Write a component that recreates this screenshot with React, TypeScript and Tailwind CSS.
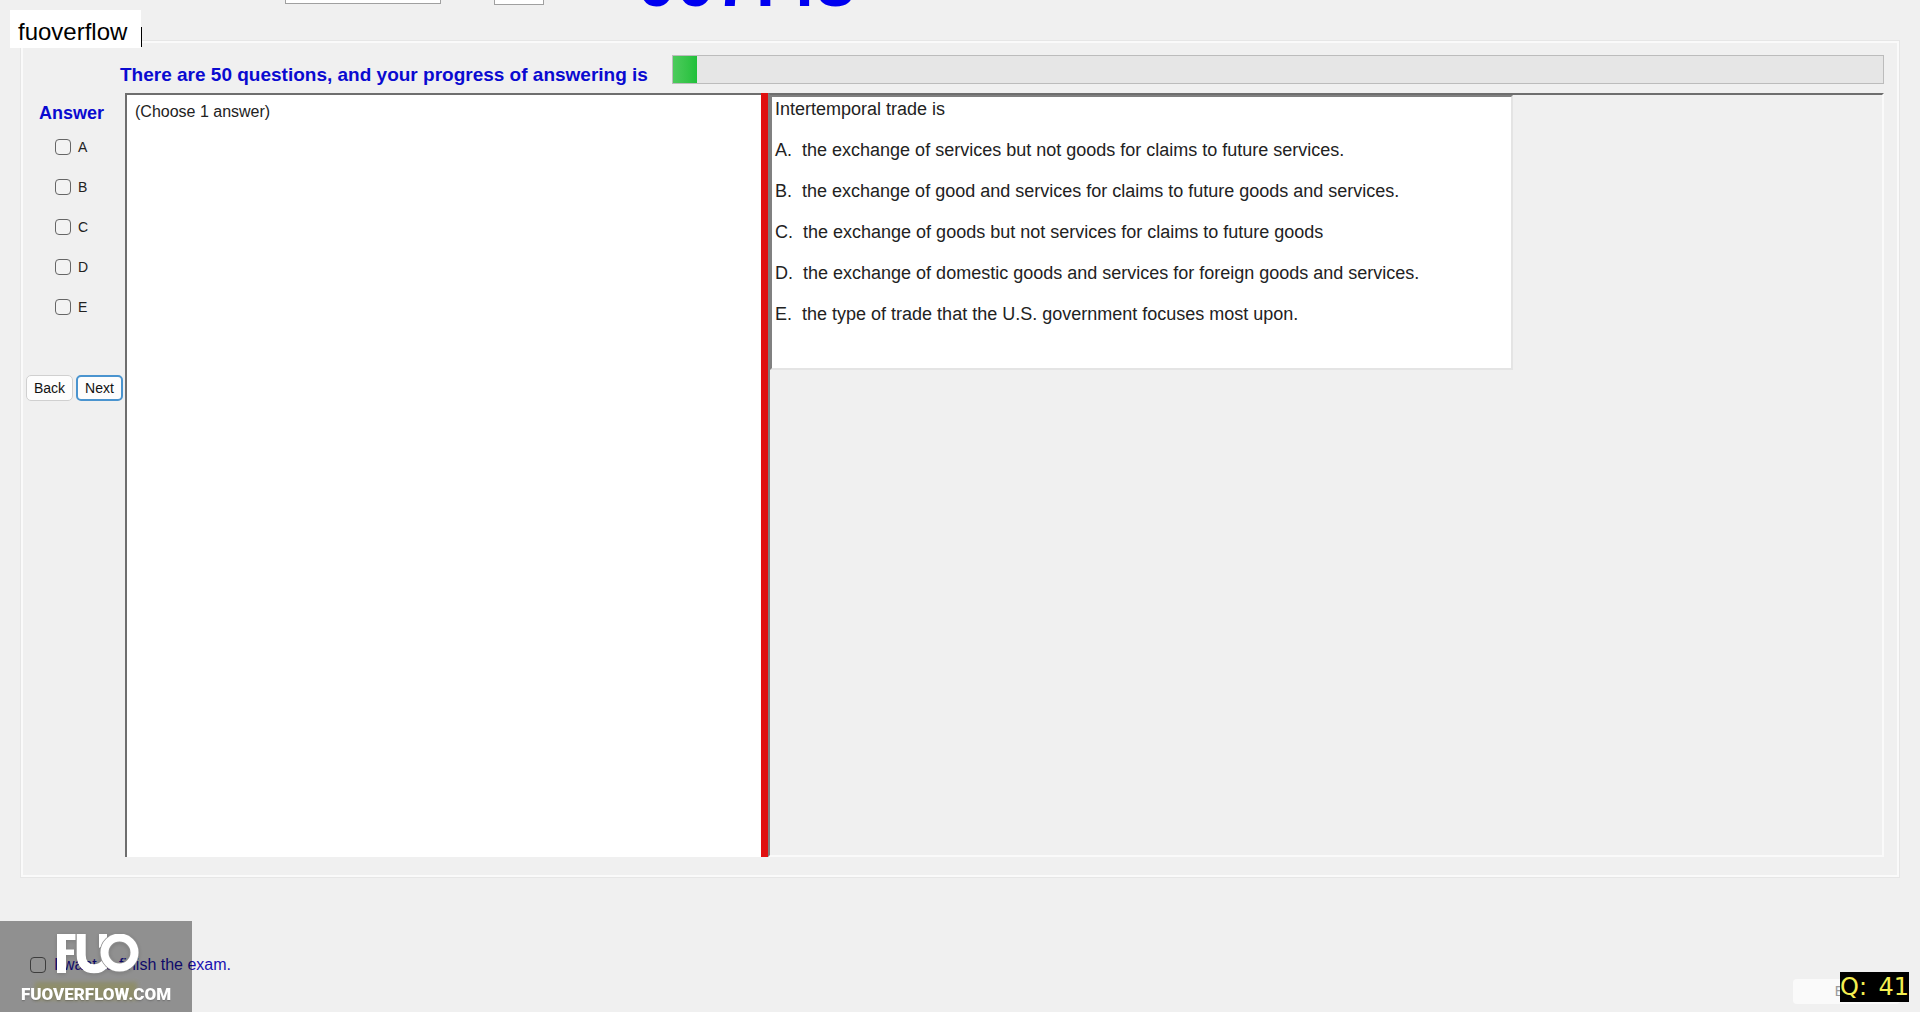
import React from 'react';

const choices = [
  { key: 'A', text: 'the exchange of services but not goods for claims to future services.' },
  { key: 'B', text: 'the exchange of good and services for claims to future goods and services.' },
  { key: 'C', text: 'the exchange of goods but not services for claims to future goods' },
  { key: 'D', text: 'the exchange of domestic goods and services for foreign goods and services.' },
  { key: 'E', text: 'the type of trade that the U.S. government focuses most upon.' },
];

const checkbox =
  'size-4 shrink-0 appearance-none rounded-[4px] border border-[#666] bg-[#f3f3f3] checked:bg-blue-600';

function TopStrip() {
  return (
    <header className="flex h-[41px] items-start overflow-hidden">
      <select aria-label="Font" className="ml-[285px] h-1 w-[156px] appearance-none border border-t-0 border-[#a0a0a0] bg-white" />
      <select aria-label="Size" className="ml-[53px] h-[5px] w-[50px] appearance-none border border-t-0 border-[#a0a0a0] bg-white" />
      <div className="ml-[93px] flex h-3 items-end text-[70px] leading-[60px] font-bold text-[#0000f0]">
        <time>007:48</time>
      </div>
    </header>
  );
}

function Sidebar() {
  return (
    <aside className="flex w-[101px] shrink-0 flex-col">
      <h2 className="mt-2 pl-[15px] text-[18px] leading-6 font-bold text-[#0a0ad0]">Answer</h2>
      <div className="mt-[10px] flex flex-col gap-4 pl-[31px]">
        {choices.map((c) => (
          <label key={c.key} className="flex h-6 items-center gap-[7px] text-[14px] text-[#222]">
            <input type="checkbox" className={checkbox} />
            {c.key}
          </label>
        ))}
      </div>
      <div className="mt-14 flex gap-[3px] pl-[2px] text-[14px] text-[#111]">
        <button className="h-[26px] w-[47px] rounded-[5px] border border-[#d0d0d0] bg-[#fdfdfd]">Back</button>
        <button className="h-[26px] w-[47px] rounded-[5px] border-2 border-[#4a94cf] bg-[#fdfdfd]">Next</button>
      </div>
    </aside>
  );
}

function Logo() {
  return (
    <div className="fixed bottom-0 left-0 flex h-[91px] w-48 flex-col items-center bg-black/40">
      <div className="absolute top-[61px] left-[35px] h-[18px] w-[102px] bg-[#8c8a50]/60 blur-[2px]" />
      <svg viewBox="0 0 82 40" className="relative mt-[13px] ml-1 h-10 w-[82px] drop-shadow-sm" role="img" aria-label="FUO" fill="none">
        <path d="M0 0H18.500V6H9V15.500H17V21H9V39H0Z" fill="white" />
        <path d="M24.200 0V21C24.200 30 29.500 34.800 37 34.800C42 34.800 46 32.500 49 29" stroke="white" strokeWidth="9" />
        <path d="M42 0H50V9L42 14Z" fill="white" />
        <circle cx="62.500" cy="18.500" r="15" stroke="#909090" strokeWidth="9.500" />
        <circle cx="62.500" cy="18.500" r="15" stroke="white" strokeWidth="8" />
      </svg>
      <p className="relative mt-1 font-[Roboto] text-[17px] leading-8 font-black text-white text-shadow-sm">FUOVERFLOW.COM</p>
    </div>
  );
}

export default function App() {
  return (
    <div className="flex min-h-screen flex-col bg-[#f0f0f0] font-['Liberation_Sans',Arial,sans-serif]">
      <TopStrip />
      <main className="mx-[21px] flex flex-1 flex-col border-2 border-[#fafafa] pr-[13px] pb-[18px] pl-[1px] outline outline-[#e6e6e6]">
        <div className="flex h-[50px] items-start pt-3">
          <p className="mt-2 ml-24 w-[532px] shrink-0 text-[19px] leading-6 font-bold whitespace-nowrap text-[#0a0ad0]">
            There are 50 questions, and your progress of answering is
          </p>
          <div role="progressbar" aria-label="Answered" aria-valuenow={1} aria-valuemax={50} className="ml-5 h-[29px] flex-1 border border-[#bcbcbc] bg-[#e6e6e6]">
            <div className="h-full w-6 bg-linear-to-r from-[#4ccb5c] to-[#1fc03a]" />
          </div>
        </div>
        <div className="flex flex-1">
          <Sidebar />
          <section className="w-[636px] border-t-2 border-l-2 border-[#6e6e6e] bg-white p-2 text-[16px] leading-[18px] text-[#222]">
            (Choose 1 answer)
          </section>
          <div className="w-[7px] bg-[#e01010]" />
          <section className="flex-1 border-2 border-t-[#6e6e6e] border-r-[#fafafa] border-b-[#fafafa] border-l-[#808080]">
            <article className="flex w-[743px] flex-col gap-[17px] border-2 border-t-[#808080] border-r-[#e4e4e4] border-b-[#e4e4e4] border-l-[#808080] bg-white pb-[42px] pl-[3px] text-[18px] leading-6 text-[#222]">
              <p>Intertemporal trade is</p>
              {choices.map((c) => (
                <p key={c.key} className="whitespace-pre">{c.key}.  {c.text}</p>
              ))}
            </article>
          </section>
        </div>
      </main>
      <footer className="flex h-[135px] items-start justify-between pt-[76px] pr-5 pl-[30px]">
        <label className="flex h-6 items-center gap-2 text-[16px] text-[#1a10b0]">
          <input type="checkbox" className={checkbox} />
          I want to finish the exam.
        </label>
        <button className="mt-[26px] h-[25px] w-[107px] rounded-[4px] bg-[#fafafa] text-[14px] text-[#999]">Exit</button>
      </footer>
      <div className="fixed top-[10px] left-[10px] h-[38px] w-[131px] bg-white pl-2 text-[24px] leading-[44px] text-black">fuoverflow</div>
      <div className="fixed top-[27px] left-[141px] h-5 w-px bg-black" />
      <Logo />
      <div className="fixed right-[11px] bottom-[10px] flex h-[30px] w-[69px] justify-between bg-black font-['DejaVu_Sans'] text-[24px] leading-[30px] text-[#f4ee50]">
        <span>Q:</span>
        <span>41</span>
      </div>
    </div>
  );
}
